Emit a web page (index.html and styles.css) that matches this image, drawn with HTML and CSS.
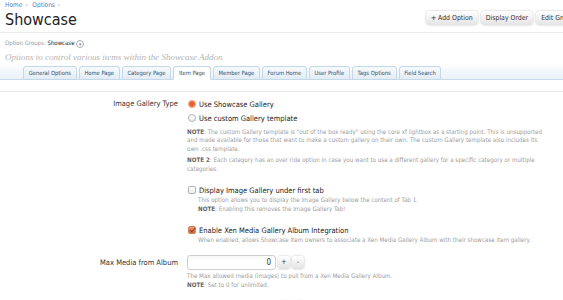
FILE: index.html
```html
<!DOCTYPE html>
<html>
<head>
    <link rel="stylesheet" href="styles.css">
</head>
<body>
    <div class="page">
        <div class="crumbs"><a href="#">Home</a> <span class="arrow">&rsaquo;</span> <a href="#">Options</a> <span class="arrow">&rsaquo;</span></div>

        <div class="title-bar">
            <h1>Showcase</h1>
            <div class="actions">
                <a class="button" href="#">+ Add Option</a>
                <a class="button" href="#">Display Order</a>
                <a class="button" href="#">Edit Group</a>
            </div>
        </div>

        <div class="group-line">Option Groups: <b>Showcase</b> <span class="drop">&#9662;</span></div>
        <p class="intro">Options to control various items within the Showcase Addon</p>

        <div class="tab-strip">
            <ul class="tabs">
                <li>General Options</li>
                <li>Home Page</li>
                <li>Category Page</li>
                <li class="active">Item Page</li>
                <li>Member Page</li>
                <li>Forum Home</li>
                <li>User Profile</li>
                <li>Tags Options</li>
                <li>Field Search</li>
            </ul>
        </div>
        <div class="tab-gap"></div>

        <form class="options">
            <dl class="row">
                <dt>Image Gallery Type</dt>
                <dd>
                    <label class="choice"><input type="radio" name="gallery" checked> Use Showcase Gallery</label>
                    <label class="choice"><input type="radio" name="gallery"> Use custom Gallery template</label>
                    <div class="note">
                        <p><b>NOTE</b>: The custom Gallery template is "out of the box ready" using the core xf lightbox as a starting point. This is unsupported and made available for those that want to make a custom gallery on their own. The custom Gallery template also includes its own .css template.</p>
                        <p><b>NOTE 2</b>: Each category has an over ride option in case you want to use a different gallery for a specific category or multiple categories.</p>
                    </div>
                </dd>
            </dl>

            <dl class="row">
                <dt></dt>
                <dd>
                    <label class="choice check"><input type="checkbox"> Display Image Gallery under first tab</label>
                    <p class="hint">This option allows you to display the Image Gallery below the content of Tab 1.<br><b>NOTE</b>: Enabling this removes the Image Gallery Tab!</p>
                </dd>
            </dl>

            <dl class="row">
                <dt></dt>
                <dd>
                    <label class="choice check"><input type="checkbox" checked> Enable Xen Media Gallery Album Integration</label>
                    <p class="hint">When enabled, allows Showcase Item owners to associate a Xen Media Gallery Album with their showcase item gallery.</p>
                </dd>
            </dl>

            <dl class="row spin-row">
                <dt>Max Media from Album</dt>
                <dd>
                    <div class="spin">
                        <input class="number" type="text" value="0">
                        <span class="spin-btn">+</span>
                        <span class="spin-btn">-</span>
                    </div>
                    <p class="note-small">The Max allowed media (images) to pull from a Xen Media Gallery Album.<br><b>NOTE</b>: Set to 0 for unlimited.</p>
                </dd>
            </dl>

            <dl class="row spin-row">
                <dt>Comments Per Page</dt>
                <dd>
                    <div class="spin">
                        <input class="number" type="text" value="5">
                        <span class="spin-btn">+</span>
                        <span class="spin-btn">-</span>
                    </div>
                </dd>
            </dl>
        </form>
    </div>
</body>
</html>
```

FILE: styles.css
```css
body {
    margin: 0;
    background-color: #fff;
    font-family: "DejaVu Sans Condensed", "DejaVu Sans", sans-serif;
    color: #333;
    overflow: hidden;
}

.page {
    width: 590px;
}

.crumbs {
    padding: 0 5px;
    height: 10px;
    line-height: 10px;
    font-size: 6.5px;
    color: #4f82b8;
}

.crumbs a {
    color: #4f82b8;
    text-decoration: none;
}

.crumbs .arrow {
    margin: 0 3px 0 1px;
    color: #7a9cc2;
}

.title-bar {
    display: flex;
    justify-content: space-between;
    align-items: flex-start;
    height: 22px;
    padding: 0 5px;
    border-bottom: 1px solid #ececec;
}

h1 {
    margin: 0;
    font-size: 16px;
    line-height: 20px;
    font-weight: normal;
    color: #222;
}

.actions {
    display: flex;
    gap: 3px;
    margin-top: 1px;
    margin-right: 6px;
}

.button {
    display: block;
    height: 14px;
    line-height: 14px;
    padding: 0 5px;
    font-size: 6.9px;
    color: #333;
    text-decoration: none;
    border-radius: 4px;
    background: linear-gradient(#ffffff, #e4e4e4);
    box-shadow: 0 0 2px rgba(0, 0, 0, .3);
}

.group-line {
    margin-top: 5px;
    padding: 0 5px;
    line-height: 10px;
    font-size: 6px;
    color: #9a9a9a;
}

.group-line b {
    font-weight: normal;
    color: #222;
}

.drop {
    display: inline-block;
    width: 6px;
    height: 6px;
    line-height: 6px;
    text-align: center;
    font-size: 5px;
    color: #777;
    border: 1px solid #aaa;
    border-radius: 50%;
    vertical-align: -1px;
}

.intro {
    margin: 3px 0 0;
    padding: 0 5px;
    line-height: 12px;
    font-family: "Liberation Serif", serif;
    font-style: italic;
    font-size: 9px;
    color: #b5b5b5;
}

.tab-strip {
    padding-top: 3px;
    background: linear-gradient(rgba(234, 242, 249, 0), #e9f1f8);
    border-bottom: 1px solid #c9dbea;
}

.tabs {
    display: flex;
    gap: 2px;
    margin: 0;
    padding: 0 0 0 23px;
    list-style: none;
}

.tabs li {
    height: 12px;
    line-height: 12px;
    padding: 0 4.7px;
    margin-bottom: -1px;
    font-size: 5.8px;
    color: #33506c;
    border: 1px solid #c5d8e8;
    border-radius: 3px 3px 0 0;
    background: linear-gradient(#f7fafd, #e2ecf5);
}

.tabs li.active {
    background: #fff;
    border-bottom-color: #fff;
}

.tab-gap {
    height: 11px;
    border-bottom: 1px solid #e6e6e6;
}

.options {
    padding-top: 5px;
}

.row {
    display: grid;
    grid-template-columns: 178px 1fr;
    column-gap: 9px;
    margin: 0 0 10.8px;
}

.row dt {
    text-align: right;
    font-size: 7.5px;
    line-height: 14px;
    color: #333;
}

.row dd {
    margin: 0;
    width: 360px;
}

.choice {
    display: flex;
    align-items: center;
    gap: 3px;
    height: 14px;
    font-size: 7.5px;
    color: #222;
}

.choice.check {
    height: 12px;
}

.choice input {
    appearance: none;
    margin: 0 0 0 1px;
    width: 8px;
    height: 8px;
    border: 1px solid #b3b3b3;
    background: linear-gradient(#fff, #ececec);
}

.choice input[type=radio] {
    border-radius: 50%;
}

.choice input[type=radio]:checked {
    border-color: #e8926c;
    background: radial-gradient(circle, #d94f1c 0, #e86a38 45%, #f2a27f 100%);
}

.choice input[type=checkbox] {
    border-radius: 2px;
    position: relative;
}

.choice input[type=checkbox]:checked {
    border-color: #c9805e;
    background: linear-gradient(#e99a74, #d5703f);
}

.choice input[type=checkbox]:checked::after {
    content: "";
    position: absolute;
    left: 2px;
    top: 0;
    width: 2px;
    height: 4px;
    border: solid #8b3a17;
    border-width: 0 1.5px 1.5px 0;
    transform: rotate(40deg);
}

.note {
    margin-top: 2.8px;
}

.note p,
.hint,
.note-small {
    margin: 0;
    font-size: 6.2px;
    line-height: 8.6px;
    color: #9d9d9d;
}

.note p + p {
    margin-top: 2.5px;
}

.note b,
.hint b,
.note-small b {
    color: #666;
}

.hint {
    padding-left: 11px;
}

.spin {
    display: flex;
    align-items: center;
    gap: 2px;
    height: 15px;
}

.number {
    box-sizing: border-box;
    width: 89px;
    height: 15px;
    padding: 0 4px;
    margin: 0;
    text-align: right;
    font-family: inherit;
    font-size: 8px;
    color: #333;
    border: 1px solid #cfcfcf;
    border-radius: 3px;
    background: linear-gradient(#f8f8f8, #fff 40%);
}

.spin-btn {
    width: 12px;
    height: 13px;
    line-height: 13px;
    text-align: center;
    font-size: 7px;
    color: #333;
    border-radius: 3px;
    background: linear-gradient(#fff, #e2e2e2);
    box-shadow: 0 0 2px rgba(0, 0, 0, .3);
}

.spin-row dt {
    line-height: 15px;
}

.note-small {
    margin-top: 1.5px;
}
```
